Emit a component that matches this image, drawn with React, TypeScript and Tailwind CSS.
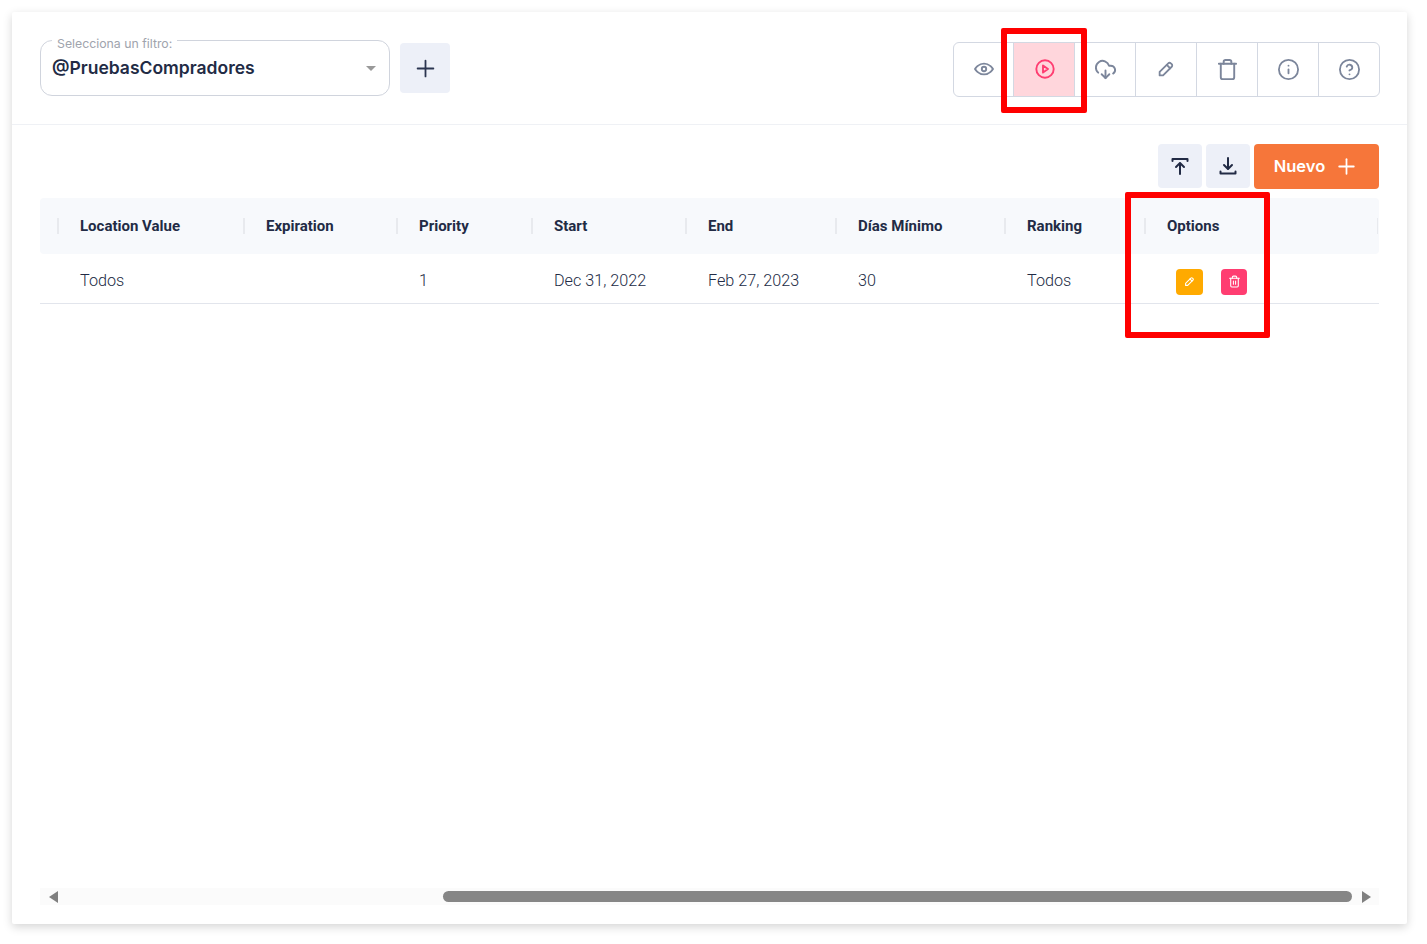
import { CircleHelp, CloudDownload, Info, Plus, Trash, Trash2 } from "lucide-react";

const columns = [
  { label: "Location Value", value: "Todos" },
  { label: "Expiration", value: "" },
  { label: "Priority", value: "1" },
  { label: "Start", value: "Dec 31, 2022" },
  { label: "End", value: "Feb 27, 2023" },
  { label: "Días Mínimo", value: "30" },
  { label: "Ranking", value: "Todos" },
];

const gridCols = "grid grid-cols-[186px_153px_135px_154px_150px_169px_140px_234px]";

const EyeIcon = () => (
  <svg width="22" height="22" viewBox="0 0 22 22" fill="none" stroke="currentColor" strokeWidth="1.9">
    <path d="M2 11s3.4-5.4 9-5.4S20 11 20 11s-3.4 5.4-9 5.4S2 11 2 11z" strokeLinejoin="round" />
    <circle cx="11" cy="11" r="2.2" />
  </svg>
);

const PlayIcon = () => (
  <svg width="22" height="22" viewBox="0 0 22 22" fill="none" stroke="#ff3d71" strokeWidth="1.9" strokeLinejoin="round">
    <circle cx="11" cy="11" r="8.7" />
    <path d="M9 7.4 L14 11 L9 14.6 Z" />
  </svg>
);

const PencilIcon = ({ size = 18 }: { size?: number }) => (
  <svg width={size} height={size} viewBox="0 0 24 24" fill="none" stroke="currentColor" strokeWidth="2.4" strokeLinejoin="round" strokeLinecap="round">
    <path d="M3.5 20.5v-4.6L15 4.4a2.4 2.4 0 0 1 3.4 0l1.2 1.2a2.4 2.4 0 0 1 0 3.4L8.1 20.5z" />
    <path d="M13 6.5l4.5 4.5" />
  </svg>
);

const UploadIcon = () => (
  <svg width="20" height="20" viewBox="0 0 20 20" fill="none" stroke="currentColor" strokeWidth="2" strokeLinecap="round" strokeLinejoin="round">
    <path d="M2.5 5V3h15v2" />
    <path d="M10 18V7.5" />
    <path d="M6 11l4-4 4 4" />
  </svg>
);

const DownloadIcon = () => (
  <svg width="20" height="20" viewBox="0 0 20 20" fill="none" stroke="currentColor" strokeWidth="2" strokeLinecap="round" strokeLinejoin="round">
    <path d="M2.5 15.5v2h15v-2" />
    <path d="M10 2v10.5" />
    <path d="M6 9l4 4 4-4" />
  </svg>
);

const Toolbar = () => (
  <div className="mt-[2px] flex h-[55px] w-[427px] overflow-hidden rounded-md border border-[#d3d8e2] text-[#7c869b]">
    <div className="flex w-[59px] items-center justify-center">
      <EyeIcon />
    </div>
    <div className="flex w-[62px] items-center justify-center border-x border-[#d3d8e2] bg-[#ffd6dc] pl-[1px]">
      <PlayIcon />
    </div>
    <div className="flex w-[60px] items-center justify-center">
      <CloudDownload size={23} strokeWidth={2} />
    </div>
    <div className="flex w-[61px] items-center justify-center border-l border-[#d3d8e2]">
      <PencilIcon />
    </div>
    <div className="flex w-[61px] items-center justify-center border-l border-[#d3d8e2]">
      <Trash size={23} strokeWidth={2} />
    </div>
    <div className="flex w-[61px] items-center justify-center border-l border-[#d3d8e2]">
      <Info size={23} strokeWidth={1.9} />
    </div>
    <div className="flex flex-1 items-center justify-center border-l border-[#d3d8e2]">
      <CircleHelp size={23} strokeWidth={1.9} />
    </div>
  </div>
);

export default function App() {
  return (
    <div className="relative h-[944px] overflow-hidden bg-white pt-[12px] pr-[20px] pb-[20px] pl-[12px] font-['Inter',sans-serif]">
      <div className="flex h-[912px] flex-col rounded-[2px] bg-white shadow-[0_3px_10px_rgba(0,0,0,0.17)]">
        <header className="flex h-[113px] items-center justify-between border-b border-[#eff1f5] pr-[27px] pl-[28px]">
          <div className="flex items-center gap-[10px]">
            <div className="relative flex h-[56px] w-[350px] items-center justify-between rounded-xl border border-[#d0d4dd] pr-[13px] pl-[11px]">
              <span className="absolute -top-[4px] left-[11px] bg-white px-[5px] text-[12.3px] leading-[14px] text-[#a0a4ad]">Selecciona un filtro:</span>
              <span className="text-[17.5px] leading-[24px] font-semibold text-[#222b45]">@PruebasCompradores</span>
              <span className="h-0 w-0 border-x-[5.5px] border-t-[5px] border-x-transparent border-t-[#999999]" />
            </div>
            <button className="flex h-[50px] w-[50px] items-center justify-center rounded-[4px] bg-[#edf0f8] text-[#2b3550]">
              <Plus size={27} strokeWidth={1.6} />
            </button>
          </div>
          <Toolbar />
        </header>

        <div className="flex flex-1 flex-col pr-[28px] pl-[28px]">
          <div className="mt-[19px] flex justify-end gap-[4px]">
            <button className="flex h-[44px] w-[44px] items-center justify-center rounded-[4px] bg-[#edf0f8] text-[#222b45]">
              <UploadIcon />
            </button>
            <button className="flex h-[44px] w-[44px] items-center justify-center rounded-[4px] bg-[#edf0f8] text-[#222b45]">
              <DownloadIcon />
            </button>
            <button className="flex h-[45px] w-[125px] items-center justify-center gap-[9px] rounded-[4px] bg-[#f6763a] text-[16.5px] font-semibold text-white">
              Nuevo
              <Plus size={25} strokeWidth={1.7} />
            </button>
          </div>

          <div className={`${gridCols} mt-[9px] h-[56px] items-center rounded-[4px] bg-[#f7f9fc] pl-[17px] font-['Roboto',sans-serif] text-[15px] font-bold text-[#222b45]`}>
            {columns.map((col) => (
              <div key={col.label} className="flex h-[16px] items-center border-l-2 border-[#e8eaee] pl-[21px]">
                {col.label}
              </div>
            ))}
            <div className="flex h-[16px] items-center justify-between border-l-2 border-[#e8eaee] pl-[21px]">
              Options
              <span className="h-[16px] border-r border-[#e8eaee]" />
            </div>
          </div>

          <div className={`${gridCols} h-[50px] items-center border-b border-[#e2e5ec] pl-[18px] font-['Roboto',sans-serif] text-[16.2px] font-light text-[#222b45]`}>
            {columns.map((col) => (
              <div key={col.label} className="pt-[5px] pl-[22px]">
                {col.value}
              </div>
            ))}
            <div className="flex items-center gap-[18px] pt-[6px] pl-[31px]">
              <button className="flex h-[26px] w-[27px] items-center justify-center rounded-[4px] bg-[#ffaa00] text-white">
                <PencilIcon size={11} />
              </button>
              <button className="flex h-[26px] w-[26px] items-center justify-center rounded-[4px] bg-[#ff3d71] text-white">
                <Trash2 size={13} strokeWidth={2} />
              </button>
            </div>
          </div>

          <div className="mt-auto mb-[19px] flex h-[17px] items-center justify-between bg-[#fbfbfb] pr-[8px] pl-[9px]">
            <span className="h-0 w-0 border-y-[6px] border-r-[9px] border-y-transparent border-r-[#808080]" />
            <div className="ml-[375px] h-[11px] w-[909px] rounded-full bg-[#868686]" />
            <span className="h-0 w-0 border-y-[6px] border-l-[9px] border-y-transparent border-l-[#808080]" />
          </div>
        </div>
      </div>

      <div className="absolute top-[28px] left-[1001px] h-[85px] w-[86px] rounded-[2px] border-[6px] border-[#ff0000]" />
      <div className="absolute top-[192px] left-[1125px] h-[146px] w-[145px] rounded-[2px] border-[6px] border-[#ff0000]" />
    </div>
  );
}
